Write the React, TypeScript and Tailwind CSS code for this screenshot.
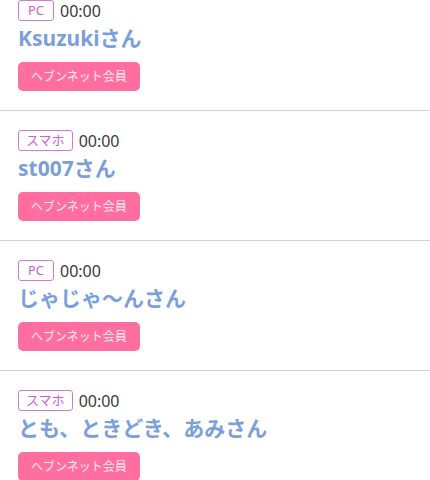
import React from "react";

const items = [
  { device: "PC", time: "00:00", name: "Ksuzukiさん" },
  { device: "スマホ", time: "00:00", name: "st007さん" },
  { device: "PC", time: "00:00", name: "じゃじゃ〜んさん" },
  { device: "スマホ", time: "00:00", name: "とも、ときどき、あみさん" },
];

export default function App() {
  return (
    <div
      className="w-[430px] h-[480px] overflow-hidden bg-white"
      style={{ fontFamily: '"Noto Sans", "Noto Sans CJK JP", sans-serif' }}
    >
      <div className="-mt-[19px]">
        {items.map((it, i) => (
          <div key={i} className="border-b border-[#d2d2d2] pl-[18px] pt-[19px] pb-[19px]">
            <div className="flex items-center h-[21px]">
              <span className="h-[21px] min-w-[36px] px-[7px] flex items-center justify-center border border-[#d37ad9] rounded-[3px] text-[13px] leading-none text-[#c763cf]">
                {it.device}
              </span>
              <span className="ml-[6px] text-[16px] leading-none text-[#3a3a3a]">{it.time}</span>
            </div>
            <div className="mt-[3px] h-[28px] flex items-center text-[21px] font-bold leading-[28px] text-[#7b9fdb]">
              {it.name}
            </div>
            <div className="mt-[10px] w-[122px] h-[29px] rounded-[5px] bg-[#ff6e9e] flex items-center justify-center text-[12px] text-white/85">
              ヘブンネット会員
            </div>
          </div>
        ))}
      </div>
    </div>
  );
}
